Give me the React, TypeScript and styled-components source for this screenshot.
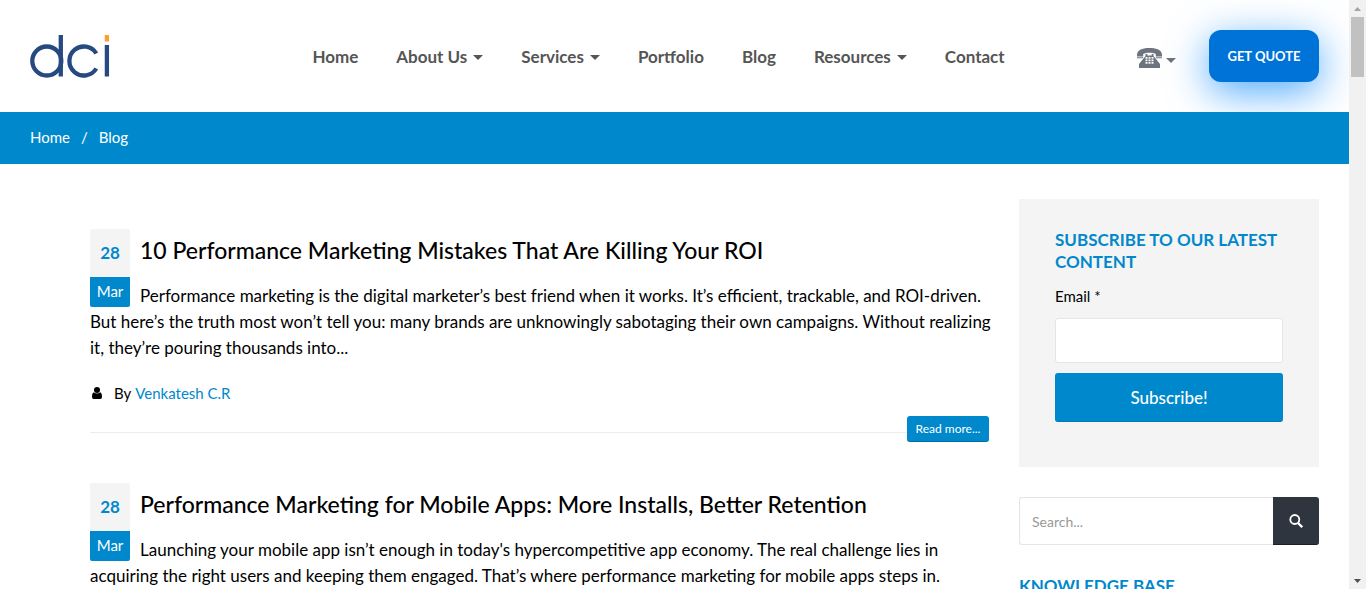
import React from "react";
import styled, { createGlobalStyle, css } from "styled-components";

const blue = "#0088cc";

const GlobalStyle = createGlobalStyle`
  *, *::before, *::after { box-sizing: border-box; }
  body {
    margin: 0;
    background: #fff;
    color: #000;
    font-family: Lato, "Open Sans", sans-serif;
    font-size: 15px;
    line-height: 26px;
  }
  h2, h3, p { margin: 0; }
  a { color: inherit; text-decoration: none; }
  input, button { font-family: inherit; }
`;

const Window = styled.div`
  display: grid;
  grid-template-columns: minmax(0, 1fr) 17px;
  height: 100vh;
  overflow: hidden;
`;

const Page = styled.div`
  overflow: hidden;
`;

const Header = styled.header`
  display: flex;
  align-items: center;
  padding: 30px;
`;

const Logo = styled.a`
  display: flex;
`;

const Nav = styled.nav`
  flex: 1;
  display: flex;
  justify-content: center;
  gap: 38px;
  padding: 2px 0 0 70px;
  white-space: nowrap;
`;

const NavLink = styled.a`
  display: flex;
  align-items: center;
  gap: 6px;
  color: #555;
  font-size: 17px;
  font-weight: 700;
  line-height: 24px;
`;

const Caret = styled.span`
  border: 5px solid transparent;
  border-top-color: currentColor;
  border-bottom-width: 0;
`;

const PhoneButton = styled.button`
  display: flex;
  align-items: center;
  gap: 4px;
  margin-right: 33px;
  padding: 4px 0 0;
  border: 0;
  background: none;
  color: #6c757d;

  ${Caret} { margin-top: 4px; }
`;

const QuoteButton = styled.button`
  width: 110px;
  height: 52px;
  border: 0;
  border-radius: 12px;
  background: #0073d9;
  box-shadow: 0 10px 40px rgba(0, 132, 255, 0.7);
  color: #fff;
  font-size: 13px;
  font-weight: 700;
  white-space: nowrap;
`;

const Breadcrumb = styled.nav`
  position: relative;
  display: flex;
  gap: 11px;
  padding: 12px 30px 14px;
  background: ${blue};
  color: #fff;
`;

const Body = styled.div`
  display: grid;
  grid-template-columns: minmax(0, 1fr) 300px;
  gap: 30px;
  padding: 35px 30px 0 90px;
`;

const Posts = styled.main`
  padding-top: 30px;
`;

const Post = styled.article`
  padding-bottom: 41px;
`;

const DateBadge = styled.div`
  float: left;
  width: 40px;
  margin-right: 10px;
  border-radius: 2px;
  overflow: hidden;
  text-align: center;
`;

const Day = styled.div`
  background: #f4f4f4;
  color: ${blue};
  font-size: 17px;
  font-weight: 700;
  line-height: 48px;
`;

const Month = styled.div`
  height: 30px;
  background: ${blue};
  color: #fff;
  font-size: 15px;
  line-height: 28px;
`;

const PostTitle = styled.h2`
  padding: 6px 0 18px;
  font-size: 23px;
  font-weight: 500;
  line-height: 30px;
`;

const Excerpt = styled.p`
  margin-right: -10px;
  font-size: 17px;
  line-height: 26px;
`;

const Meta = styled.div`
  display: flex;
  align-items: center;
  padding: 19px 0 10px 2px;

  svg { margin-right: 12px; }
`;

const Author = styled.a`
  margin-left: 4px;
  color: ${blue};
`;

const PostFooter = styled.div`
  display: flex;
  align-items: center;

  &::before {
    content: "";
    flex: 1;
    height: 1px;
    margin-top: 7px;
    background: #ececec;
  }
`;

const ReadMore = styled.a`
  width: 82px;
  border-bottom: 1px solid #006fa6;
  border-radius: 3px;
  background: ${blue};
  color: #fff;
  font-size: 12px;
  line-height: 25px;
  text-align: center;
`;

const SubscribeCard = styled.form`
  display: flex;
  flex-direction: column;
  padding: 30px 36px 45px;
  background: #f4f4f4;
`;

const SideHeading = styled.h3`
  color: ${blue};
  font-size: 17px;
  font-weight: 700;
  line-height: 22px;
`;

const Label = styled.label`
  padding: 10px 0 9px;
`;

const field = css`
  border: 1px solid #e5e5e5;
  border-radius: 3px;
  background: #fff;
  outline: 0;
`;

const EmailInput = styled.input`
  ${field}
  height: 45px;
  padding: 0 12px;
`;

const SubscribeButton = styled.button`
  height: 49px;
  margin-top: 10px;
  border: 0;
  border-bottom: 1px solid #007ab8;
  border-radius: 3px;
  background: ${blue};
  color: #fff;
  font-size: 17px;
  font-weight: 500;
`;

const Search = styled.form`
  display: flex;
  height: 48px;
  margin: 30px 0;
`;

const SearchInput = styled.input`
  ${field}
  flex: 1;
  min-width: 0;
  padding: 0 12px;
  border-right: 0;
  border-radius: 3px 0 0 3px;
  font-size: 14px;

  &::placeholder { color: #999; }
`;

const SearchButton = styled.button`
  display: grid;
  place-items: center;
  width: 46px;
  padding: 0;
  border: 0;
  border-bottom: 1px solid #1c2027;
  border-radius: 0 3px 3px 0;
  background: #2e353e;
  color: #fff;
`;

const Scrollbar = styled.div`
  display: flex;
  flex-direction: column;
  align-items: center;
  justify-content: space-between;
  background: #f1f1f1;
`;

const Thumb = styled.div`
  width: 13px;
  height: 60px;
  background: #c1c1c1;
`;

const ArrowCell = styled.div<{ $color: string }>`
  display: grid;
  place-items: center;
  height: 17px;
  color: ${(p) => p.$color};
`;

const posts = [
  {
    title: "10 Performance Marketing Mistakes That Are Killing Your ROI",
    text: "Performance marketing is the digital marketer’s best friend when it works. It’s efficient, trackable, and ROI-driven. But here’s the truth most won’t tell you: many brands are unknowingly sabotaging their own campaigns. Without realizing it, they’re pouring thousands into...",
  },
  {
    title: "Performance Marketing for Mobile Apps: More Installs, Better Retention",
    text: "Launching your mobile app isn’t enough in today's hypercompetitive app economy. The real challenge lies in acquiring the right users and keeping them engaged. That’s where performance marketing for mobile apps steps in.",
  },
];

const links = [
  { label: "Home" },
  { label: "About Us", menu: true },
  { label: "Services", menu: true },
  { label: "Portfolio" },
  { label: "Blog" },
  { label: "Resources", menu: true },
  { label: "Contact" },
];

export default function App() {
  return (
    <>
      <GlobalStyle />
      <Window>
        <Page>
          <Header>
            <Logo href="#" aria-label="dci">
              <svg width="80" height="44" viewBox="0 0 80 44" fill="none" stroke="#264a7f" strokeWidth="4.300">
                <circle cx="16.800" cy="27" r="14.500" />
                <path d="M30.800 1V42.500M66.300 19.500A14.500 14.500 0 1 0 66.300 34.500M76.900 11V42.500" />
                <path d="M76.900 1V7.500" stroke="#fb9f2d" />
              </svg>
            </Logo>
            <Nav aria-label="Main">
              {links.map((l) => (
                <NavLink href="#" key={l.label}>
                  {l.label}
                  {l.menu && <Caret />}
                </NavLink>
              ))}
            </Nav>
            <PhoneButton aria-label="Call us">
              <svg width="25" height="20" viewBox="0 0 25 20" fill="currentColor">
                <path d="M0 8.500V7C0 2.500 4.500 0 12.500 0S25 2.500 25 7v1.500h-6.200V6C16 4.300 9 4.300 6.200 6v2.500z" />
                <path d="M0 9.300h6.200v.900H0zM18.800 9.300H25v.900h-6.200z" />
                <path fillRule="evenodd" d="M8.500 6h1.800v1.500h4.400V6h1.800v2L23 16v4H2v-4L8.500 8zM8.500 9v1.700h2V9zM11.500 9v1.700h2V9zM14.500 9v1.700h2V9zM8.500 11.500v1.700h2v-1.700zM11.500 11.500v1.700h2v-1.700zM14.500 11.500v1.700h2v-1.700zM8.500 14v1.700h2V14zM11.500 14v1.700h2V14zM14.500 14v1.700h2V14z" />
              </svg>
              <Caret />
            </PhoneButton>
            <QuoteButton>GET QUOTE</QuoteButton>
          </Header>
          <Breadcrumb aria-label="Breadcrumb">
            <a href="#">Home</a>
            <span>/</span>
            <a href="#">Blog</a>
          </Breadcrumb>
          <Body>
            <Posts>
              {posts.map((p) => (
                <Post key={p.title}>
                  <DateBadge>
                    <Day>28</Day>
                    <Month>Mar</Month>
                  </DateBadge>
                  <PostTitle>
                    <a href="#">{p.title}</a>
                  </PostTitle>
                  <Excerpt>{p.text}</Excerpt>
                  <Meta>
                    <svg width="10" height="12" viewBox="0 0 10 12">
                      <circle cx="5" cy="3" r="3" />
                      <path d="M2 5.200C.600 5.500 0 7.500 0 9.500 0 11.200.600 12 1.800 12h6.400c1.200 0 1.800-.800 1.800-2.500 0-2-.600-4-2-4.300C7.200 6.800 2.800 6.800 2 5.200z" />
                    </svg>
                    By <Author href="#">Venkatesh C.R</Author>
                  </Meta>
                  <PostFooter>
                    <ReadMore href="#">Read more...</ReadMore>
                  </PostFooter>
                </Post>
              ))}
            </Posts>
            <aside>
              <SubscribeCard>
                <SideHeading>SUBSCRIBE TO OUR LATEST CONTENT</SideHeading>
                <Label htmlFor="email">Email *</Label>
                <EmailInput id="email" type="email" />
                <SubscribeButton>Subscribe!</SubscribeButton>
              </SubscribeCard>
              <Search>
                <SearchInput type="search" aria-label="Search" placeholder="Search..." />
                <SearchButton aria-label="Search">
                  <svg width="14" height="14" viewBox="0 0 14 14" fill="none" stroke="currentColor" strokeWidth="1.800">
                    <circle cx="5.800" cy="5.500" r="4.500" />
                    <path d="M9 9l4.200 4.200" strokeWidth="2.300" />
                  </svg>
                </SearchButton>
              </Search>
              <SideHeading>KNOWLEDGE BASE</SideHeading>
            </aside>
          </Body>
        </Page>
        <Scrollbar aria-hidden="true">
          <div>
            <ArrowCell $color="#a3a3a3">
              <svg width="7" height="4" fill="currentColor"><path d="M0 4L3.500 0L7 4z" /></svg>
            </ArrowCell>
            <Thumb />
          </div>
          <ArrowCell $color="#505050">
            <svg width="7" height="4" fill="currentColor"><path d="M0 0L3.500 4L7 0z" /></svg>
          </ArrowCell>
        </Scrollbar>
      </Window>
    </>
  );
}
